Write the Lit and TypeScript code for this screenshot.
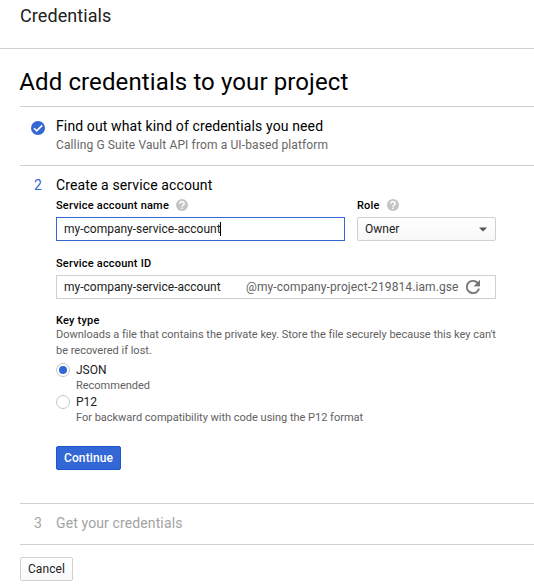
import { LitElement, html, css } from "lit";
import { customElement } from "lit/decorators.js";

const helpIcon = html`<svg class="help" viewBox="0 0 12 12" width="12" height="12">
  <circle cx="6" cy="6" r="6" fill="#c4c4c4"></circle>
  <path d="M3.9 4.7a2.1 1.9 0 1 1 3.3 1.4C6.4 6.7 6 6.9 6 7.8" fill="none" stroke="#fff" stroke-width="1.5"></path>
  <rect x="5.25" y="8.6" width="1.5" height="1.5" fill="#fff"></rect>
</svg>`;

@customElement("app-root")
export class AppRoot extends LitElement {
  static styles = css`
    :host {
      display: block;
      height: 588px;
      overflow: hidden;
      background: #fff;
      color: #000;
      font-family: Roboto, "Liberation Sans", sans-serif;
      font-size: 12px;
      line-height: 16px;
      white-space: nowrap;
    }
    * { box-sizing: border-box; }
    header {
      height: 49px;
      padding: 4px 0 0 20px;
      border-bottom: 1px solid #d0d0d0;
      font-size: 18px;
      line-height: 24px;
      letter-spacing: 0.08px;
      color: #212121;
    }
    main { padding-left: 20px; }
    h1 {
      margin: 0;
      padding: 17px 0 8px;
      font-size: 24px;
      font-weight: 400;
      line-height: 32px;
      letter-spacing: 0.11px;
      text-indent: -0.7px;
      border-bottom: 1px solid #d0d0d0;
    }
    .step {
      display: grid;
      grid-template-columns: 36px 440px;
      align-content: start;
      padding-top: 9px;
      border-bottom: 1px solid #d0d0d0;
    }
    .one { height: 59px; }
    .two { height: 338px; }
    .three { height: 41px; color: #a3a3a3; }
    .mark {
      width: 36px;
      padding-left: 14px;
      font-size: 14px;
      line-height: 20px;
    }
    .mark.done { padding: 5px 0 0 11px; line-height: 0; }
    .mark.active { color: #3367d6; }
    .title { font-size: 14px; line-height: 20px; letter-spacing: 0.12px; }
    .sub { margin-top: 1px; color: #666; letter-spacing: 0.12px; }
    .label {
      display: flex;
      align-items: center;
      gap: 7px;
      height: 16px;
      padding-top: 2px;
      font-size: 11px;
      font-weight: 500;
      letter-spacing: 0.2px;
    }
    .help { margin-top: -2px; }
    .row { display: grid; grid-template-columns: 289px 139px; gap: 12px; margin-top: 2px; }
    .box {
      display: flex;
      align-items: center;
      height: 24px;
      margin-top: 4px;
      padding: 0 7px;
      border: 1px solid #d0d0d0;
      color: #212121;
    }
    .focus { border-color: #3367d6; }
    .caret { width: 1px; height: 14px; margin-left: -1px; background: #000; }
    .select {
      justify-content: space-between;
      border-radius: 2px;
      background: linear-gradient(#fff, #f7f7f7);
    }
    .account { margin-top: 14px; }
    .value { width: 182px; }
    .domain { width: 220px; color: #616161; letter-spacing: 0.1px; }
    .key { margin-top: 15px; }
    .key .label { height: 12px; line-height: 12px; }
    .note { color: #616161; font-size: 11px; letter-spacing: -0.01px; }
    .about { padding-top: 1px; height: 32px; }
    .option { display: grid; grid-template-columns: 20px 1fr; margin-top: 4px; height: 30px; color: #212121; }
    .option + .option { margin-top: 2px; }
    .option .note { line-height: 14px; padding-top: 1px; }
    .radio {
      display: grid;
      place-items: center;
      width: 14px;
      height: 14px;
      margin-top: 1px;
      border: 1px solid #c6c6c6;
      border-radius: 50%;
    }
    .dot { width: 8px; height: 8px; border-radius: 50%; background: #3367d6; }
    button {
      display: block;
      height: 24px;
      padding: 0;
      border: 1px solid #d0d0d0;
      border-radius: 2px;
      font: 400 12px/22px Roboto, "Liberation Sans", sans-serif;
      letter-spacing: 0.1px;
    }
    .primary {
      width: 65px;
      margin-top: 22px;
      border-color: #1a56d0;
      background: #3367d6;
      color: #fff;
      font-weight: 500;
    }
    .cancel { width: 53px; margin-top: 12px; background: linear-gradient(#fff, #f8f8f8); color: #212121; }
  `;

  private option(name: string, note: string, checked: boolean) {
    return html`<div class="option">
      <span class="radio">${checked ? html`<span class="dot"></span>` : ""}</span>
      <div><div>${name}</div><div class="note">${note}</div></div>
    </div>`;
  }

  render() {
    return html`
      <header><span>Credentials</span></header>
      <main>
        <h1>Add credentials to your project</h1>
        <section class="step one">
          <div class="mark done">
            <svg width="14" height="14" viewBox="0 0 14 14">
              <circle cx="7" cy="7" r="7" fill="#3367d6"></circle>
              <path d="M3 7.2 5.7 9.9 11.2 4.4" fill="none" stroke="#fff" stroke-width="1.6"></path>
            </svg>
          </div>
          <div>
            <div class="title">Find out what kind of credentials you need</div>
            <div class="sub">Calling G Suite Vault API from a UI-based platform</div>
          </div>
        </section>
        <section class="step two">
          <div class="mark active">2</div>
          <div>
            <div class="title">Create a service account</div>
            <div class="row">
              <div>
                <div class="label">Service account name ${helpIcon}</div>
                <div class="box focus">my-company-service-account<span class="caret"></span></div>
              </div>
              <div>
                <div class="label">Role ${helpIcon}</div>
                <div class="box select">
                  Owner
                  <svg width="10" height="5" viewBox="0 0 10 5"><path d="M1 0.5h8L5 4.5z" fill="#555"></path></svg>
                </div>
              </div>
            </div>
            <div class="account">
              <div class="label">Service account ID</div>
              <div class="box">
                <span class="value">my-company-service-account</span>
                <span class="domain">@my-company-project-219814.iam.gse</span>
                <svg width="14" height="14" viewBox="4 4 16 16">
                  <path
                    fill="#757575"
                    stroke="#757575"
                    stroke-width="0.3"
                    d="M17.65 6.35A7.96 7.96 0 0 0 12 4a8 8 0 1 0 7.73 10h-2.08A6 6 0 1 1 12 6c1.66 0 3.14.69 4.22 1.78L13 11h7V4z"
                  ></path>
                </svg>
              </div>
            </div>
            <div class="key">
              <div class="label">Key type</div>
              <div class="note about">
                Downloads a file that contains the private key. Store the file securely because this key can't<br />be
                recovered if lost.
              </div>
              ${this.option("JSON", "Recommended", true)}
              ${this.option("P12", "For backward compatibility with code using the P12 format", false)}
            </div>
            <button class="primary">Continue</button>
          </div>
        </section>
        <section class="step three">
          <div class="mark">3</div>
          <div class="title">Get your credentials</div>
        </section>
        <button class="cancel">Cancel</button>
      </main>
    `;
  }
}
